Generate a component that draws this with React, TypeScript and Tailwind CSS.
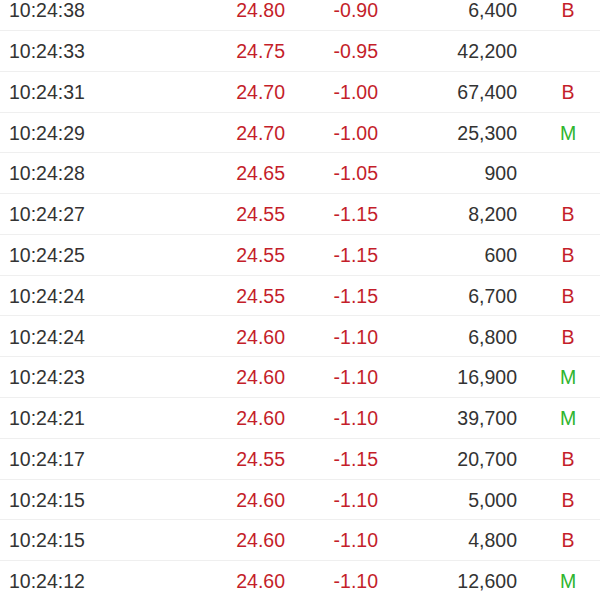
import React from "react";

type Row = { t: string; p: string; c: string; v: string; f: "" | "B" | "M" };

const rows: Row[] = [
  { t: "10:24:38", p: "24.80", c: "-0.90", v: "6,400", f: "B" },
  { t: "10:24:33", p: "24.75", c: "-0.95", v: "42,200", f: "" },
  { t: "10:24:31", p: "24.70", c: "-1.00", v: "67,400", f: "B" },
  { t: "10:24:29", p: "24.70", c: "-1.00", v: "25,300", f: "M" },
  { t: "10:24:28", p: "24.65", c: "-1.05", v: "900", f: "" },
  { t: "10:24:27", p: "24.55", c: "-1.15", v: "8,200", f: "B" },
  { t: "10:24:25", p: "24.55", c: "-1.15", v: "600", f: "B" },
  { t: "10:24:24", p: "24.55", c: "-1.15", v: "6,700", f: "B" },
  { t: "10:24:24", p: "24.60", c: "-1.10", v: "6,800", f: "B" },
  { t: "10:24:23", p: "24.60", c: "-1.10", v: "16,900", f: "M" },
  { t: "10:24:21", p: "24.60", c: "-1.10", v: "39,700", f: "M" },
  { t: "10:24:17", p: "24.55", c: "-1.15", v: "20,700", f: "B" },
  { t: "10:24:15", p: "24.60", c: "-1.10", v: "5,000", f: "B" },
  { t: "10:24:15", p: "24.60", c: "-1.10", v: "4,800", f: "B" },
  { t: "10:24:12", p: "24.60", c: "-1.10", v: "12,600", f: "M" },
];

export default function App() {
  return (
    <div className="w-[600px] h-[600px] overflow-hidden bg-white font-['Liberation_Sans',Arial,sans-serif] text-[19.5px]">
      <div className="mt-[-9.9px] flex flex-col">
        {rows.map((r, i) => (
          <div
            key={i}
            className="h-[40.8px] flex items-center border-b border-[#efefef] pl-[9px] pt-[1.5px] shrink-0"
          >
            <div className="w-[176px] text-[#333333]">{r.t}</div>
            <div className="w-[100px] text-right text-[#c41e2a]">{r.p}</div>
            <div className="w-[93px] text-right text-[#c41e2a]">{r.c}</div>
            <div className="w-[139px] text-right text-[#333333]">{r.v}</div>
            <div
              className={
                "ml-[21px] w-[60px] text-center " +
                (r.f === "M" ? "text-[#2eb52e]" : "text-[#c41e2a]")
              }
            >
              {r.f}
            </div>
          </div>
        ))}
      </div>
    </div>
  );
}
